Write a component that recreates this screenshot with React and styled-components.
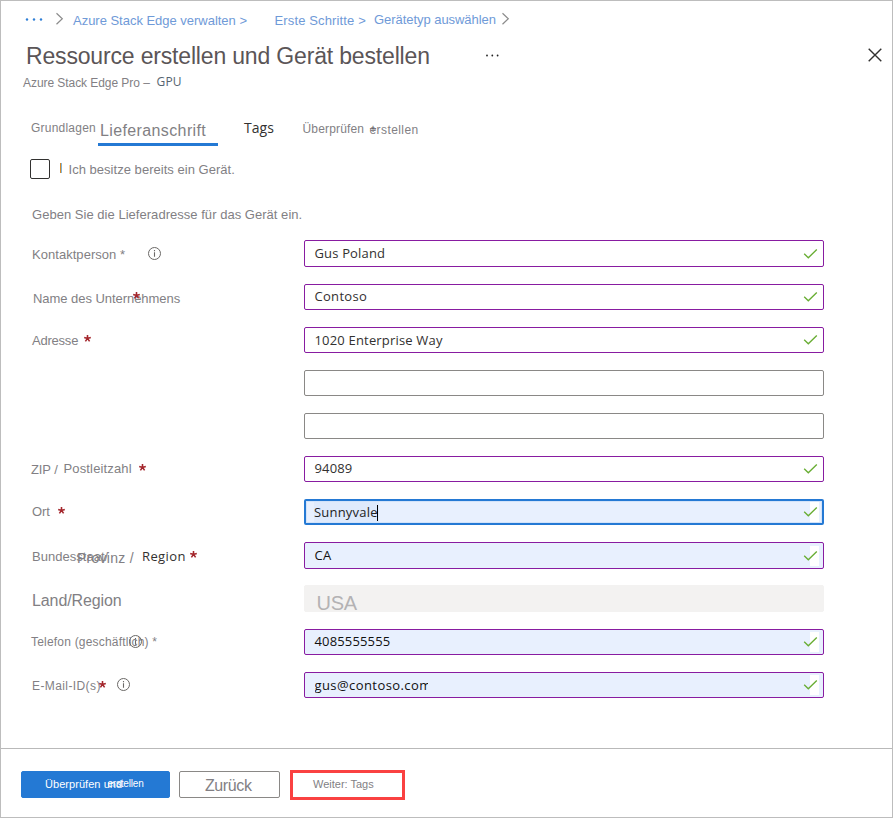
import React from 'react';
import styled, { createGlobalStyle, css } from 'styled-components';

const GlobalStyle = createGlobalStyle`
  * { box-sizing: border-box; }
  body { margin: 0; background: #fff; }
`;

const sans = '"Liberation Sans", Arial, sans-serif';
const humanist = '"Open Sans", "Noto Sans", sans-serif';
const grey = '#827f84';
const linkBlue = '#6f9ad8';

const Blade = styled.div`
  display: flex;
  flex-direction: column;
  width: 893px;
  height: 818px;
  border: 1px solid #bdbdbd;
  background: #fff;
  overflow: hidden;
`;

/* A run of text: $x and $y are the gaps before and above it, $w its advance. */
const Text = styled.span`
  flex: none;
  display: block;
  white-space: pre;
  line-height: normal;
  font-family: ${(p) => (p.$ui ? humanist : sans)};
  font-size: ${(p) => p.$size || 13}px;
  letter-spacing: ${(p) => p.$ls || 0}px;
  color: ${(p) => p.$color || grey};
  margin-left: ${(p) => p.$x || 0}px;
  margin-top: ${(p) => p.$y || 0}px;
  ${(p) => p.$w !== undefined && css`width: ${p.$w}px;`}
  ${(p) => p.$clip && css`overflow: hidden;`}
`;

const Title = styled(Text).attrs({ as: 'h1' })`
  margin-bottom: 0;
  font-weight: 400;
`;

const Glyph = styled.svg`
  flex: none;
  display: block;
  overflow: visible;
  fill: none;
  margin-left: ${(p) => p.$x || 0}px;
  margin-top: ${(p) => p.$y || 0}px;
`;

const Breadcrumb = styled.nav`
  display: flex;
  align-items: flex-start;
  height: 36px;
`;

const TitleBar = styled.header`
  display: flex;
  align-items: flex-start;
  height: 37px;
`;

const Subtitle = styled.div`
  display: flex;
  align-items: flex-start;
  height: 36px;
`;

const TabList = styled.div`
  display: flex;
  align-items: flex-start;
  height: 48px;
`;

const ActiveTab = styled.div`
  width: 120px;
  height: 36px;
  border-bottom: 3px solid #2479d4;
`;

const OptionRow = styled.label`
  display: flex;
  align-items: flex-start;
  height: 42px;
`;

const CheckBox = styled.span`
  flex: none;
  width: 20px;
  height: 20px;
  margin: 1px 0 0 29px;
  border: 1px solid #323130;
  border-radius: 2px;
`;

const Marker = styled.span`
  flex: none;
  width: 2px;
  height: 10px;
  margin: 5px 0 0 10px;
  background: linear-gradient(90deg, #d68a2b 50%, #7fb5dc 50%);
`;

const Intro = styled.div`
  display: flex;
  height: 40px;
`;

const Form = styled.div`
  display: flex;
  flex-direction: column;
  flex: 1;
`;

const FormRow = styled.div`
  display: grid;
  grid-template-columns: 303px 520px;
  align-items: start;
  height: ${(p) => p.$h || 43}px;
`;

const LabelCell = styled.div`
  display: flex;
  align-items: flex-start;
`;

const Field = styled.div`
  display: flex;
  align-items: flex-start;
  position: relative;
  height: ${(p) => p.$h || 26}px;
  border: 1px solid ${(p) => (p.$empty ? '#8a8886' : '#881ca1')};
  border-radius: 2px;
  background: ${(p) => (p.$filled ? '#e8f0fe' : '#fff')};
  ${(p) => p.$focus && css`
    border: 2px solid #2479d4;
    box-shadow: inset 0 0 0 1px #d3e3f9;
  `}
  ${(p) => p.$disabled && css`
    border-color: #f3f2f1;
    background: #f3f2f1;
  `}
`;

const Status = styled.span`
  position: absolute;
  top: 0;
  bottom: 0;
  right: ${(p) => (p.$focus ? 3 : 4)}px;
  display: flex;
  align-items: center;
  width: 15px;
  &::before {
    content: '';
    position: absolute;
    right: 0;
    width: 9px;
    height: 20px;
    background: #fff;
  }
  svg { position: relative; }
`;

const Highlight = styled.span`
  display: flex;
  align-items: flex-start;
  width: 65px;
  height: 20px;
  margin: 1px 0 0 8px;
  background: #dfeafc;
`;

const Caret = styled.span`
  flex: none;
  width: 1px;
  height: 16px;
  margin-top: 3px;
  background: #000;
`;

const Footer = styled.footer`
  display: flex;
  align-items: flex-start;
  height: 69px;
  padding: 21px 0 0 20px;
  border-top: 1px solid #b9b9b9;
`;

const Button = styled.button`
  display: flex;
  align-items: flex-start;
  flex: none;
  width: ${(p) => p.$w}px;
  height: 27px;
  padding: 0;
  margin: 1px 0 0;
  border: 1px solid #8a8886;
  border-radius: 2px;
  background: #fff;
  text-align: left;
  ${(p) => p.$primary && css`
    margin-right: 9px;
    border-color: #2479d4;
    background: #2479d4;
  `}
  ${(p) => p.$marked && css`
    height: 30px;
    margin: 0 0 0 10px;
    border: 3px solid #fa4141;
    border-radius: 0;
  `}
`;

const Chevron = (p) => (
  <Glyph width="8" height="12" {...p}>
    <path d="M0.5 0.3 L6.3 5.8 L0.5 11.3" stroke="#8c8c8c" strokeWidth="1.2" />
  </Glyph>
);

const Dots = ({ color, step, r, ...p }) => (
  <Glyph width={step * 2 + 2} height="3" {...p}>
    {[0, 1, 2].map((i) => (
      <circle key={i} cx={1 + i * step} cy="1.5" r={r} fill={color} />
    ))}
  </Glyph>
);

const Info = (p) => (
  <Glyph width="13" height="13" {...p}>
    <circle cx="6.5" cy="6.5" r="6" stroke="#6a6866" />
    <path d="M6.5 5.3V9.8M6.5 3V4.3" stroke="#6a6866" strokeWidth="1.1" />
  </Glyph>
);

const Star = (p) => (
  <Glyph width="7" height="7" {...p}>
    <path
      d="M3.5 0V3.4M0.2 2.5L3.5 3.4L6.8 2.5M1.4 6.4L3.5 3.4L5.6 6.4"
      stroke="#a4262c"
      strokeWidth="1.55"
    />
  </Glyph>
);

const Valid = ({ focus }) => (
  <Status $focus={focus}>
    <Glyph width="15" height="10">
      <path d="M0.2 4.8L4.3 8.8L12.8 0.5" stroke="#68ad33" strokeWidth="1.35" />
    </Glyph>
  </Status>
);

const rows = [
  {
    h: 44,
    fh: 27,
    label: (
      <>
        <Text $x={31} $y={7} $w={116} $ls={0.04}>Kontaktperson *</Text>
        <Info $y={7} />
      </>
    ),
    value: 'Gus Poland', ls: 0.16, y: 3,
  },
  {
    label: (
      <>
        <Text $x={32} $y={7} $w={100} $ls={-0.05}>Name des Unternehmens</Text>
        <Star $y={8} />
      </>
    ),
    value: 'Contoso', ls: 0.3, y: 2,
  },
  {
    label: (
      <>
        <Text $x={31} $y={6} $w={52} $ls={-0.22}>Adresse</Text>
        <Star $y={8} />
      </>
    ),
    value: '1020 Enterprise Way', ls: 0.18, y: 3,
  },
  { empty: true },
  { empty: true },
  {
    label: (
      <>
        <Text $x={30} $y={6} $w={32.5} $ls={-0.1}>ZIP /</Text>
        <Text $y={5} $w={75.5} $ls={0.15}>Postleitzahl</Text>
        <Star $y={8} />
      </>
    ),
    value: '94089', ls: 0.15, y: 2,
  },
  {
    label: (
      <>
        <Text $x={31} $y={5} $w={25.5} $ls={-0.1}>Ort</Text>
        <Star $y={8} />
      </>
    ),
    value: 'Sunnyvale', ls: 0.2, filled: true, focus: true,
  },
  {
    fh: 27,
    label: (
      <>
        <Text $x={31} $y={7} $w={45} $ls={0.03}>Bundesstaat/</Text>
        <Text $size={14} $y={8} $w={65} $ls={0.26}>Provinz /</Text>
        <Text $ui $y={5} $w={47.5} $ls={0.4} $color="#323130">Region</Text>
        <Star $y={8.5} />
      </>
    ),
    value: 'CA', ls: 0.3, y: 3, filled: true,
  },
  {
    h: 44,
    fh: 27,
    label: <Text $size={16} $x={31} $y={7} $ls={-0.1}>Land/Region</Text>,
    value: 'USA', disabled: true,
  },
  {
    label: (
      <>
        <Text $size={12} $x={30} $y={6} $w={98} $ls={0.2}>Telefon (geschäftlich) *</Text>
        <Info $y={6} />
      </>
    ),
    value: '4085555555', ls: 0.15, y: 2, filled: true,
  },
  {
    label: (
      <>
        <Text $size={12} $x={31} $y={7} $w={67} $ls={0.4}>E-Mail-ID(s)</Text>
        <Star $y={8.5} />
        <Info $x={11} $y={6} />
      </>
    ),
    value: 'gus@contoso.com', ls: 0.42, y: 3, w: 113.5, filled: true,
  },
];

function FieldContent({ row }) {
  if (row.empty) return null;
  if (row.disabled) {
    return <Text $size={20} $x={11.5} $y={6} $ls={-0.3} $color="#b4b2b4">USA</Text>;
  }
  if (row.focus) {
    return (
      <>
        <Highlight>
          <Text $ui $y={1} $w={63} $ls={row.ls} $color="#222">{row.value}</Text>
          <Caret />
        </Highlight>
        <Valid focus />
      </>
    );
  }
  return (
    <>
      <Text $ui $x={9.5} $y={row.y} $w={row.w} $clip={!!row.w} $ls={row.ls}
        $color={row.filled ? '#111' : '#323130'}>{row.value}</Text>
      <Valid />
    </>
  );
}

export default function App() {
  return (
    <>
      <GlobalStyle />
      <Blade>
        <Breadcrumb>
          <Dots color="#2f7fd6" step={7} r={1.2} $x={24.5} $y={16.5} />
          <Chevron $x={14} $y={12} />
          <Text $x={9.5} $y={12} $w={201.5} $ls={-0.02} $color={linkBlue}>{'Azure Stack Edge verwalten >'}</Text>
          <Text $y={12} $w={99.5} $ls={0.14} $color={linkBlue}>{'Erste Schritte >'}</Text>
          <Text $y={11} $w={127.5} $ls={-0.05} $color={linkBlue}>Gerätetyp auswählen</Text>
          <Chevron $y={12} />
        </Breadcrumb>
        <TitleBar>
          <Title $size={23} $x={25} $y={6} $w={459.5} $ls={-0.17} $color="#5b5557">
            Ressource erstellen und Gerät bestellen
          </Title>
          <Dots color="#222" step={5.3} r={0.9} $y={17} />
          <Glyph width="14" height="14" $x={370} $y={11}>
            <path d="M0.7 0.7L13.3 13.3M13.3 0.7L0.7 13.3" stroke="#323130" strokeWidth="1.4" />
          </Glyph>
        </TitleBar>
        <Subtitle>
          <Text $size={12} $x={22} $y={2} $w={133.5} $ls={-0.06}>Azure Stack Edge Pro –</Text>
          <Text $ui $size={12} $y={-1} $ls={0.2} $color="#55636f">GPU</Text>
        </Subtitle>
        <TabList>
          <Text $size={12} $x={30} $y={11} $w={67} $ls={0.22}>Grundlagen</Text>
          <ActiveTab>
            <Text $size={16} $x={2} $y={12} $ls={0.38}>Lieferanschrift</Text>
          </ActiveTab>
          <Text $ui $size={14} $x={26} $y={8} $w={58.5} $ls={0.05} $color="#323130">Tags</Text>
          <Text $size={12} $y={12} $w={67} $ls={0.16}>Überprüfen</Text>
          <Text $size={12} $y={12} $w={0} $color="#6a676c">+</Text>
          <Text $size={12} $y={13} $ls={0.42}>erstellen</Text>
        </TabList>
        <OptionRow>
          <CheckBox />
          <Marker />
          <Text $x={6.5} $y={4} $ls={0.03}>Ich besitze bereits ein Gerät.</Text>
        </OptionRow>
        <Intro>
          <Text $x={31} $y={7} $ls={0.03}>Geben Sie die Lieferadresse für das Gerät ein.</Text>
        </Intro>
        <Form>
          {rows.map((row, i) => (
            <FormRow key={i} $h={row.h}>
              <LabelCell>{row.label}</LabelCell>
              <Field $h={row.fh} $empty={row.empty} $filled={row.filled}
                $focus={row.focus} $disabled={row.disabled}>
                <FieldContent row={row} />
              </Field>
            </FormRow>
          ))}
        </Form>
        <Footer>
          <Button $primary $w={149}>
            <Text $size={11} $x={23} $y={6} $w={62.5} $ls={0.05} $color="#fff">Überprüfen und</Text>
            <Text $size={10} $y={6} $ls={-0.2} $color="#fff">erstellen</Text>
          </Button>
          <Button $w={101}>
            <Text $size={16} $x={25} $y={5} $ls={-0.4}>Zurück</Text>
          </Button>
          <Button $marked $w={115}>
            <Text $size={11} $x={20} $y={5}>Weiter: Tags</Text>
          </Button>
        </Footer>
      </Blade>
    </>
  );
}
